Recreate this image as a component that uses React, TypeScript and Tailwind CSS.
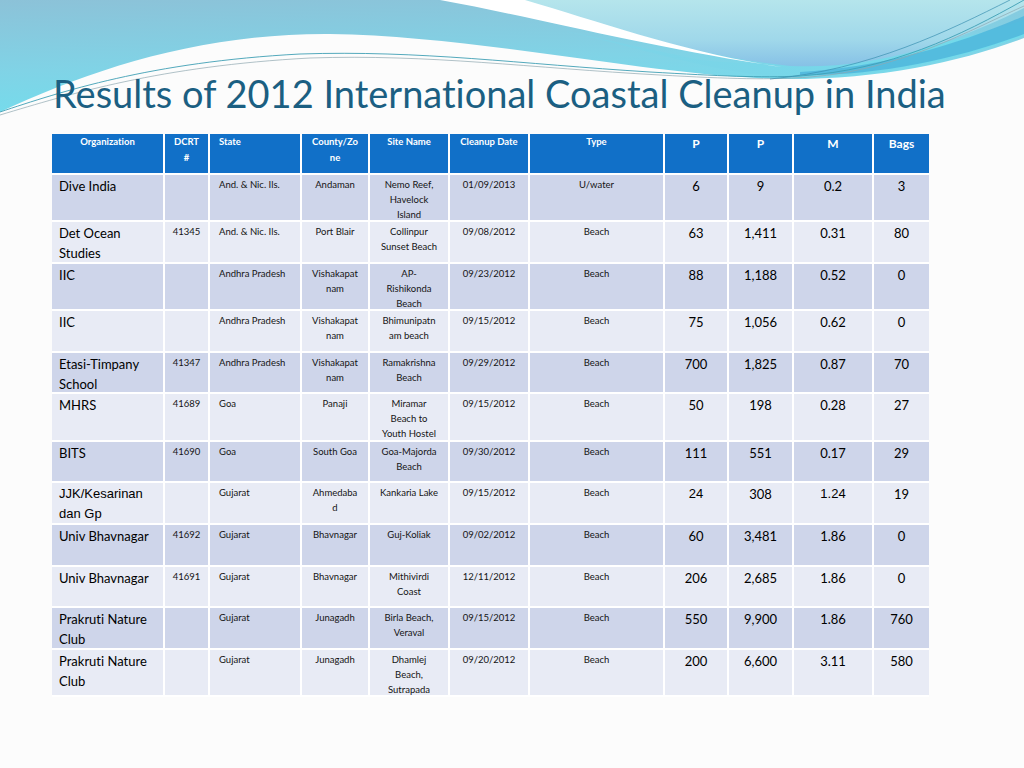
import React from "react";

type Row = {
  org: string[];
  dcrt: string;
  state: string;
  county: string[];
  site: string[];
  date: string;
  type: string;
  p1: string;
  p2: string;
  m: string;
  bags: string;
  h: number;
  arial?: boolean;
};

const rows: Row[] = [
  { org: ["Dive India"], dcrt: "", state: "And. & Nic. Ils.", county: ["Andaman"], site: ["Nemo Reef,", "Havelock", "Island"], date: "01/09/2013", type: "U/water", p1: "6", p2: "9", m: "0.2", bags: "3", h: 47 },
  { org: ["Det Ocean", "Studies"], dcrt: "41345", state: "And. & Nic. Ils.", county: ["Port Blair"], site: ["Collinpur", "Sunset Beach"], date: "09/08/2012", type: "Beach", p1: "63", p2: "1,411", m: "0.31", bags: "80", h: 42 },
  { org: ["IIC"], dcrt: "", state: "Andhra Pradesh", county: ["Vishakapat", "nam"], site: ["AP-", "Rishikonda", "Beach"], date: "09/23/2012", type: "Beach", p1: "88", p2: "1,188", m: "0.52", bags: "0", h: 47 },
  { org: ["IIC"], dcrt: "", state: "Andhra Pradesh", county: ["Vishakapat", "nam"], site: ["Bhimunipatn", "am beach"], date: "09/15/2012", type: "Beach", p1: "75", p2: "1,056", m: "0.62", bags: "0", h: 42 },
  { org: ["Etasi-Timpany", "School"], dcrt: "41347", state: "Andhra Pradesh", county: ["Vishakapat", "nam"], site: ["Ramakrishna", "Beach"], date: "09/29/2012", type: "Beach", p1: "700", p2: "1,825", m: "0.87", bags: "70", h: 41 },
  { org: ["MHRS"], dcrt: "41689", state: "Goa", county: ["Panaji"], site: ["Miramar", "Beach to", "Youth Hostel"], date: "09/15/2012", type: "Beach", p1: "50", p2: "198", m: "0.28", bags: "27", h: 48 },
  { org: ["BITS"], dcrt: "41690", state: "Goa", county: ["South Goa"], site: ["Goa-Majorda", "Beach"], date: "09/30/2012", type: "Beach", p1: "111", p2: "551", m: "0.17", bags: "29", h: 41 },
  { org: ["JJK/Kesarinan", "dan Gp"], dcrt: "", state: "Gujarat", county: ["Ahmedaba", "d"], site: ["Kankaria Lake"], date: "09/15/2012", type: "Beach", p1: "24", p2: "308", m: "1.24", bags: "19", h: 42, arial: true },
  { org: ["Univ Bhavnagar"], dcrt: "41692", state: "Gujarat", county: ["Bhavnagar"], site: ["Guj-Koliak"], date: "09/02/2012", type: "Beach", p1: "60", p2: "3,481", m: "1.86", bags: "0", h: 42 },
  { org: ["Univ Bhavnagar"], dcrt: "41691", state: "Gujarat", county: ["Bhavnagar"], site: ["Mithivirdi", "Coast"], date: "12/11/2012", type: "Beach", p1: "206", p2: "2,685", m: "1.86", bags: "0", h: 41 },
  { org: ["Prakruti Nature", "Club"], dcrt: "", state: "Gujarat", county: ["Junagadh"], site: ["Birla Beach,", "Veraval"], date: "09/15/2012", type: "Beach", p1: "550", p2: "9,900", m: "1.86", bags: "760", h: 42 },
  { org: ["Prakruti Nature", "Club"], dcrt: "", state: "Gujarat", county: ["Junagadh"], site: ["Dhamlej", "Beach,", "Sutrapada"], date: "09/20/2012", type: "Beach", p1: "200", p2: "6,600", m: "3.11", bags: "580", h: 47 },
];

const widths = [113, 45, 92, 68, 80, 80, 135, 64, 65, 80, 55];

function Lines({ lines }: { lines: string[] }) {
  return (
    <div className="-mb-[4px]">
      {lines.map((l, i) => (
        <div key={i}>{l}</div>
      ))}
    </div>
  );
}

function Wave() {
  return (
    <svg
      width="1024"
      height="130"
      viewBox="0 0 1024 130"
      className="absolute top-0 left-0"
    >
      <defs>
        <linearGradient id="gL" x1="0" y1="0" x2="0.25" y2="1">
          <stop offset="0" stopColor="#8cc2d8" />
          <stop offset="0.6" stopColor="#80d3e6" />
          <stop offset="1" stopColor="#74dcec" />
        </linearGradient>
        <linearGradient id="gR" x1="0" y1="0" x2="0" y2="1">
          <stop offset="0" stopColor="#b5e5ec" />
          <stop offset="0.6" stopColor="#a0d8ea" />
          <stop offset="1" stopColor="#86c1e6" />
        </linearGradient>
        <linearGradient id="gC" x1="0" y1="0" x2="1" y2="0">
          <stop offset="0" stopColor="#7fd2e6" />
          <stop offset="1" stopColor="#70dbeb" />
        </linearGradient>
      </defs>
      <path
        d="M0,0 H1024 V38 C960,62 880,80 780,79 C650,76 480,36 330,34 C200,33 90,70 0,112 Z"
        fill="url(#gL)"
      />
      <path
        d="M560,30 C650,50 700,70 780,77 C880,80 960,58 1024,36 V20 C900,60 800,70 700,60 Z"
        fill="url(#gC)"
      />
      <path
        d="M520,0 C600,22 690,56 790,66 C880,70 960,40 1024,8 V0 Z"
        fill="url(#gR)"
      />
      <path
        d="M440,0 C540,18 650,48 782,67 C690,54 600,22 525,0 Z"
        fill="#ffffff"
      />
      <path
        d="M800,72 C880,68 960,44 1024,16 V34 C960,58 880,76 800,75 Z"
        fill="#4fb6dc"
        opacity="0.85"
      />
      <path
        d="M0,112 C60,92 150,62 300,54 C420,50 520,64 650,72 C720,76 760,78 800,76 C890,70 960,36 1024,0"
        fill="none"
        stroke="#3f9fb4"
        strokeWidth="0.9"
      />
      <path
        d="M0,115 C70,94 160,66 310,58 C430,54 530,68 660,75 C730,79 770,80 810,77 C900,70 970,30 1024,6"
        fill="none"
        stroke="#8fa8b0"
        strokeWidth="0.7"
      />
      <path
        d="M770,79 C870,70 950,30 1010,0"
        fill="none"
        stroke="#3a8fb0"
        strokeWidth="0.7"
      />
    </svg>
  );
}

export default function App() {
  const small = "text-[9.5px] leading-[15px] pt-[2px] text-[#141414]";
  const big = "text-[13px] leading-[20px] pt-[1px] text-black";
  const cell = "border-b-2 border-white align-top p-0";
  return (
    <div className="relative w-[1024px] h-[768px] overflow-hidden bg-[#fcfcfc] font-['Lato',sans-serif] [font-variant-ligatures:none]">
      <Wave />
      <div className="relative flex flex-col pt-[73px] pl-[52px]">
        <h1 className="ml-[1px] text-[38px] leading-[40px] font-normal text-[#1b5f82] whitespace-nowrap">
          Results of 2012 International Coastal Cleanup in India
        </h1>
        <table className="mt-[21px] w-[877px] table-fixed border-separate border-spacing-0">
          <colgroup>
            {widths.map((w, i) => (
              <col key={i} style={{ width: w }} />
            ))}
          </colgroup>
          <thead>
            <tr className="h-[41px] bg-[#1170c8] text-white">
              {[
                ["Organization"],
                ["DCRT", "#"],
                ["State"],
                ["County/Zo", "ne"],
                ["Site Name"],
                ["Cleanup Date"],
                ["Type"],
              ].map((h, i) => (
                <th
                  key={i}
                  className={`${cell} border-r-2 font-bold text-[9.5px] leading-[16px] ${
                    i === 2 ? "text-left pl-[9px]" : "text-center"
                  }`}
                >
                  <Lines lines={h} />
                </th>
              ))}
              {["P", "P", "M", "Bags"].map((h, i) => (
                <th
                  key={i}
                  className={`${cell} ${i < 3 ? "border-r-2" : ""} font-bold text-[12px] leading-[20px] text-center`}
                >
                  <Lines lines={[h]} />
                </th>
              ))}
            </tr>
          </thead>
          <tbody>
            {rows.map((r, idx) => (
              <tr
                key={idx}
                style={{ height: r.h }}
                className={idx % 2 === 0 ? "bg-[#ced5ea]" : "bg-[#e8ebf5]"}
              >
                <td
                  className={`${cell} border-r-2 pl-[7px] ${big} ${
                    r.arial ? "font-['Liberation_Sans',Arial,sans-serif] text-[13px]" : ""
                  }`}
                >
                  <Lines lines={r.org} />
                </td>
                <td className={`${cell} border-r-2 text-center ${small}`}>
                  <Lines lines={[r.dcrt]} />
                </td>
                <td className={`${cell} border-r-2 pl-[9px] ${small}`}>
                  <Lines lines={[r.state]} />
                </td>
                <td className={`${cell} border-r-2 text-center ${small}`}>
                  <Lines lines={r.county} />
                </td>
                <td className={`${cell} border-r-2 text-center ${small}`}>
                  <Lines lines={r.site} />
                </td>
                <td className={`${cell} border-r-2 text-center ${small}`}>
                  <Lines lines={[r.date]} />
                </td>
                <td className={`${cell} border-r-2 text-center ${small}`}>
                  <Lines lines={[r.type]} />
                </td>
                <td
                  className={`${cell} border-r-2 text-center ${big} ${
                    r.arial ? "font-['Liberation_Sans',Arial,sans-serif]" : ""
                  }`}
                >
                  <Lines lines={[r.p1]} />
                </td>
                <td className={`${cell} border-r-2 text-center ${big}`}>
                  <Lines lines={[r.p2]} />
                </td>
                <td
                  className={`${cell} border-r-2 text-center ${big} ${
                    r.arial ? "font-['Liberation_Sans',Arial,sans-serif]" : ""
                  }`}
                >
                  <Lines lines={[r.m]} />
                </td>
                <td className={`${cell} text-center ${big}`}>
                  <Lines lines={[r.bags]} />
                </td>
              </tr>
            ))}
          </tbody>
        </table>
      </div>
    </div>
  );
}
